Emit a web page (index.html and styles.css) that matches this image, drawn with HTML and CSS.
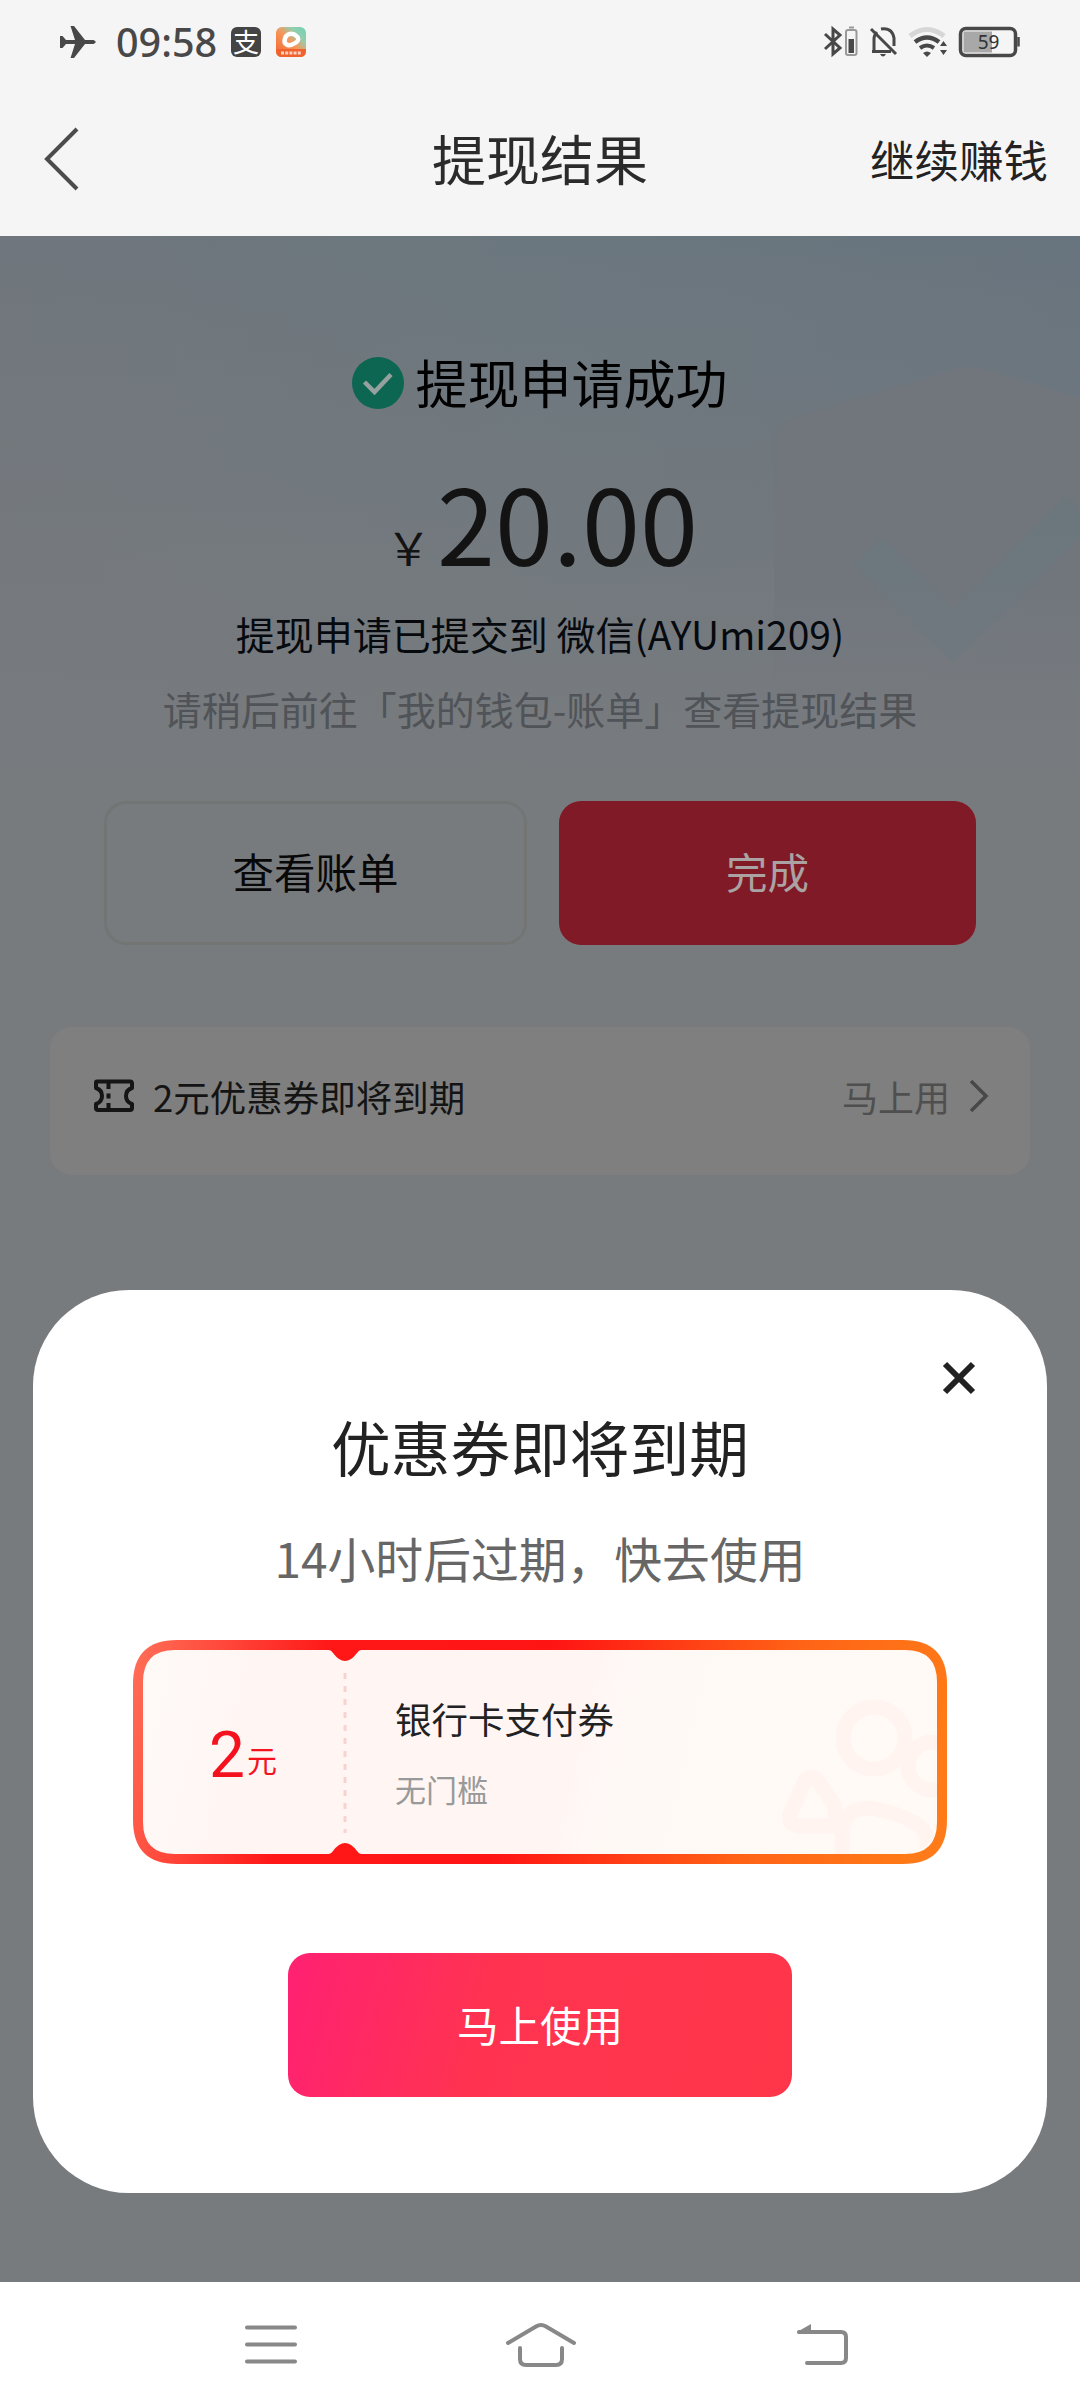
FILE: index.html
```html
<!DOCTYPE html>
<html lang="zh-CN">
<head>
<meta charset="utf-8">
<title>提现结果</title>
<link rel="stylesheet" href="styles.css">
</head>
<body>
<div class="phone">
  <header class="top">
    <div class="status">
      <svg class="ic-plane" width="36" height="34" viewBox="0 0 36 34"><path d="M0 11h2.500l3.500 4h9L10.500 1H14l11 14h8.500q4.500 2 0 4H25L14 33h-3.500L15 19H6l-3.500 4H0z" fill="#484848"/></svg>
      <span class="clock">09:58</span>
      <span class="alipay">支</span>
      <svg class="ic-app" width="30" height="30" viewBox="0 0 30 30">
        <defs><linearGradient id="app" x1="0" y1="1" x2="1" y2="0"><stop offset="0" stop-color="#f2622c"/><stop offset=".5" stop-color="#f5985c"/><stop offset=".75" stop-color="#8fd0b0"/><stop offset="1" stop-color="#6fd0b4"/></linearGradient></defs>
        <rect width="30" height="30" rx="6" fill="url(#app)"/><path d="M0 22h30v2q0 6-6 6H6q-6 0-6-6z" fill="#f0622c"/>
        <path d="M12 7.500q5-2 9 2 3 3-1 6-6 4-9.500 2-3-2-1.500-6 1-3 3-4z" fill="none" stroke="#fff" stroke-width="4.500" stroke-linejoin="round"/>
        <path d="M5 26h20" stroke="#fff" stroke-width="3" stroke-dasharray="3 1.200" opacity=".7"/>
      </svg>
      <svg class="ic-right" width="200" height="36" viewBox="0 0 200 36" fill="none" stroke="#484848">
        <path d="M2 10l15 14-7 6V5l7 6L2 25" stroke-width="3"/>
        <rect x="23" y="6" width="10.500" height="25" rx="2" stroke="#999" stroke-width="2"/><path d="M26 3.500h5" stroke="#999" stroke-width="2"/><path d="M25.500 15h5.500v14h-5.500z" fill="#484848" stroke="none"/>
        <path d="M51 27.500V15q0-4 3-7m4-3q11-2 13 9v8M49 27.500h19" stroke-width="3"/><path d="M48 5l25 25" stroke-width="3"/><path d="M57 30h6q-3 5-6 0z" fill="#484848" stroke="none"/>
        <path d="M87 12q17-13 34 0" stroke="#d6d6d6" stroke-width="5"/><path d="M92 18q12-9 24 0" stroke-width="4.500"/><path d="M97 24q7-5 14 0" stroke-width="4"/><path d="M100 29q4-3 8 0l-4 4z" fill="#484848" stroke="none"/>
        <path d="M117 22l3.500-5 3.500 5zM117 26l3.500 5 3.500-5z" fill="#484848" stroke="none"/>
        <rect x="137.500" y="4.500" width="55" height="27" rx="5.500" stroke-width="3.500"/><path d="M140.500 7.500h28.500v21h-28.500z" fill="#a8a8a8" stroke="none"/><path d="M195.500 13v9.500" stroke-width="2.500"/>
        <text x="165.500" y="25" text-anchor="middle" class="bat" stroke="none">59</text>
      </svg>
    </div>
    <div class="nav">
      <svg class="back" width="40" height="66" viewBox="0 0 40 66"><path d="M35 2L5 32l30 30" fill="none" stroke="#4c4c4c" stroke-width="4"/></svg>
      <h1>提现结果</h1>
      <a class="earn">继续赚钱</a>
    </div>
  </header>

  <main class="page">
    <svg class="shield" width="310" height="400" viewBox="0 0 310 400">
      <defs><linearGradient id="sh" x1="0" y1="0" x2="0" y2="1"><stop offset="0" stop-color="#71767d"/><stop offset=".55" stop-color="#71767d"/><stop offset="1" stop-color="#787b80" stop-opacity="0"/></linearGradient>
      <linearGradient id="ck" x1="0" y1="0" x2="0" y2="1"><stop offset="0" stop-color="#6b777d"/><stop offset="1" stop-color="#70787f"/></linearGradient></defs>
      <path d="M4 75q0-14 14-18L175 10q24-10 48 0l87 26v364H4z" fill="url(#sh)"/>
      <path d="M98 189l85 85 127-127" fill="none" stroke="url(#ck)" stroke-width="38"/>
    </svg>
    <div class="success">
      <svg width="52" height="52" viewBox="0 0 52 52"><circle cx="26" cy="26" r="26" fill="#0c6652"/><path d="M12.500 25L22.500 35 39 17.500" fill="none" stroke="#96a19f" stroke-width="4.500"/></svg>
      <span>提现申请成功</span>
    </div>
    <div class="amount"><span class="yen">￥</span><span class="num">20.00</span></div>
    <p class="to">提现申请已提交到 微信(AYUmi209)</p>
    <p class="hint">请稍后前往「我的钱包-账单」查看提现结果</p>
    <div class="actions"><a class="btn ghost">查看账单</a><a class="btn done">完成</a></div>
    <div class="notice">
      <svg class="ticket" width="42" height="34" viewBox="0 0 42 34" fill="none" stroke="#151515" stroke-width="4" stroke-linejoin="round"><path d="M3 3.500q0-1 1-1h33q2 0 2 2V9q-6 2-6 8t6 8v4q0 2-2 2H5q-2 0-2-2v-4q6-2 6-8T3 9z"/><path d="M15.500 3v7m0 4.500v5m0 4.500v7"/></svg>
      <span class="ntext">2元优惠券即将到期</span>
      <span class="use">马上用</span>
      <svg width="22" height="34" viewBox="0 0 22 34"><path d="M3 2l15 15L3 32" fill="none" stroke="#484848" stroke-width="3.500"/></svg>
    </div>

    <section class="modal">
      <svg class="close" width="34" height="34" viewBox="0 0 34 34"><path d="M3 3l28 28M31 3L3 31" stroke="#222" stroke-width="6"/></svg>
      <h2>优惠券即将到期</h2>
      <p class="sub">14小时后过期，快去使用</p>
      <div class="coupon">
        <svg class="frame" width="814" height="224" viewBox="0 0 814 224">
          <defs>
            <linearGradient id="bd" gradientUnits="userSpaceOnUse" x1="0" y1="0" x2="780" y2="214"><stop offset="0" stop-color="#ff7058"/><stop offset=".24" stop-color="#ff1717"/><stop offset=".5" stop-color="#ff1414"/><stop offset=".8" stop-color="#ff6416"/><stop offset="1" stop-color="#ff7a18"/></linearGradient>
            <linearGradient id="bg" gradientUnits="userSpaceOnUse" x1="0" y1="60" x2="770" y2="240"><stop offset="0" stop-color="#fffaf7"/><stop offset=".14" stop-color="#fff6f4"/><stop offset=".56" stop-color="#fff6f4"/><stop offset=".62" stop-color="#fff9f6"/><stop offset="1" stop-color="#fffaf6"/></linearGradient>
            <clipPath id="in"><rect x="10" y="10" width="794" height="204" rx="32"/></clipPath>
          </defs>
          <path d="M44 0H770Q814 0 814 44V180Q814 224 770 224H44Q0 224 0 180V44Q0 0 44 0z" fill="url(#bd)"/>
          <path d="M42 10H196q2 0 4 3 12 16 24 0 2-3 4-3H772Q804 10 804 42V182Q804 214 772 214H228q-2 0-4-3-12-16-24 0-2 3-4 3H42Q10 214 10 182V42Q10 10 42 10z" fill="url(#bg)"/>
          <g clip-path="url(#in)" fill="none" stroke="#fff4f0" stroke-width="15"><circle cx="741" cy="98" r="31"/><circle cx="799" cy="126" r="24"/><path d="M672 141q5-8 13 0l17 25v20h-36q-12-2-9-12zM709 224v-34q3-22 28-22 54 10 57 30v26"/></g>
          <path d="M212 33v160" stroke="#f9d2cf" stroke-width="3" stroke-dasharray="6 7"/>
        </svg>
        <div class="worth"><b>2</b><span>元</span></div>
        <div class="info"><strong>银行卡支付券</strong><small>无门槛</small></div>
      </div>
      <a class="btn go">马上使用</a>
    </section>
  </main>

  <footer class="sysbar">
    <svg width="52" height="40" viewBox="0 0 52 40"><path d="M2 2.500h48M2 19.500h48M2 36.500h48" stroke="#888" stroke-width="4" stroke-linecap="round"/></svg>
    <svg class="home" width="72" height="46" viewBox="0 0 72 46"><path d="M3 21L31 4.500q5-3 10 0l28 16.500M15 26v11q0 6 6 6h30q6 0 6-6V26" fill="none" stroke="#888" stroke-width="4" stroke-linecap="round"/></svg>
    <svg width="54" height="46" viewBox="0 0 54 46"><path d="M3 10h42q5 0 5 5v21q0 5-5 5H11" fill="none" stroke="#888" stroke-width="4" stroke-linecap="round"/><path d="M1 10L15 2v10H2z" fill="#888"/></svg>
  </footer>
</div>
</body>
</html>
```
FILE: styles.css
```css
* { box-sizing: border-box; margin: 0; padding: 0; }
body { width: 1080px; font-family: "Noto Sans CJK SC", sans-serif; }
svg { display: block; flex: none; }
.phone { width: 1080px; height: 2408px; display: flex; flex-direction: column; overflow: hidden; }

.top { height: 236px; background: #f5f5f5; }
.status { height: 84px; display: flex; align-items: center; padding: 0 57px 0 60px; }
.clock { margin-left: 20px; width: 108px; font: 500 39.500px/84px "Noto Sans", sans-serif; color: #484848; }
.alipay { margin-left: 7px; width: 30px; height: 30px; border-radius: 6px; background: #444; color: #fff; font-size: 26px; line-height: 28px; text-align: center; }
.ic-app { margin-left: 15px; }
.ic-right { margin-left: auto; }
.bat { font: 400 19px "Noto Sans", sans-serif; fill: #333; }
.nav { height: 148px; display: grid; grid-template-columns: 1fr auto 1fr; align-items: center; padding: 0 32px; }
.back { margin: 3px 0 0 10px; }
.nav h1 { font-size: 54px; line-height: 80px; font-weight: 400; color: #2b2b2b; }
.earn { justify-self: end; font-size: 44.500px; color: #222; }

.page { position: relative; height: 2046px; padding-top: 117px; background: linear-gradient(180deg, rgba(120,123,126,0) 0, #787b7e 540px), linear-gradient(90deg, #70767d 0, #6b777e 50%, #68747e 100%); }
.shield { position: absolute; right: 0; top: 126px; }
.success { position: relative; height: 60px; display: flex; align-items: center; justify-content: center; gap: 11px; font-size: 52px; line-height: 60px; color: #000; }
.success span { margin-top: -2px; }
.amount { position: relative; height: 140px; margin-top: 38px; padding-left: 4px; display: flex; justify-content: center; align-items: baseline; color: #131313; line-height: 140px; }
.yen { font-size: 45px; }
.num { margin-left: 6px; font-size: 104.500px; }
.to { position: relative; margin-top: 12px; height: 60px; text-align: center; font-size: 39px; line-height: 60px; color: #060a0e; }
.hint { position: relative; margin-top: 15px; height: 60px; text-align: center; font-size: 39px; line-height: 60px; color: #505357; }
.actions { margin: 63px 104px 0; display: flex; gap: 32px; }
.btn { height: 144px; border-radius: 22px; display: flex; align-items: center; justify-content: center; padding-bottom: 4px; font-size: 41.500px; }
.actions .btn { flex: 1; }
.ghost { border: 3px solid #737474; color: #080808; }
.done { background: #7f1a26; color: #aaa2a3; }
.notice { margin: 82px 50px 0; height: 148px; border-radius: 22px; background: #7f7f7f; display: flex; align-items: center; padding: 0 40px 10px 43px; font-size: 36px; }
.ntext { margin-left: 18px; font-size: 36.500px; color: #141414; }
.use { margin-left: auto; margin-right: 18px; color: #4f4f4f; }

.modal { position: absolute; left: 33px; top: 1054px; width: 1014px; height: 903px; border-radius: 96px; background: #fff; display: flex; flex-direction: column; align-items: center; }
.close { align-self: flex-end; margin: 71px 71px 0 0; }
.modal h2 { margin-top: 11px; font-size: 59.700px; line-height: 80px; font-weight: 400; color: #222; }
.sub { margin-top: 37px; font-size: 47.800px; line-height: 70px; color: #666; }
.coupon { position: relative; margin-top: 47px; width: 814px; height: 224px; display: flex; align-items: center; }
.frame { position: absolute; left: 0; top: 0; }
.worth { position: relative; width: 212px; height: 224px; padding: 78px 0 0 76px; display: flex; align-items: flex-start; color: #f5121f; }
.worth b { font: 400 64px/75px Roboto, sans-serif; }
.worth span { margin: 4px 0 0 2px; font-size: 30px; line-height: 75px; }
.info { position: relative; margin: -1px 0 0 50px; display: flex; flex-direction: column; gap: 20px; }
.info strong { font-size: 36.500px; line-height: 54px; font-weight: 400; color: #222; }
.info small { font-size: 31px; line-height: 46px; color: #999; }
.go { margin-top: 89px; width: 504px; padding-bottom: 3px; color: #fff; background: linear-gradient(105deg, #ff2270 3%, #ff3350 40%, #ff364a 100%); }

.sysbar { height: 126px; background: #fff; display: flex; align-items: center; padding: 0 230px 1px 245px; justify-content: space-between; }
.home { margin-left: -11px; }
```
